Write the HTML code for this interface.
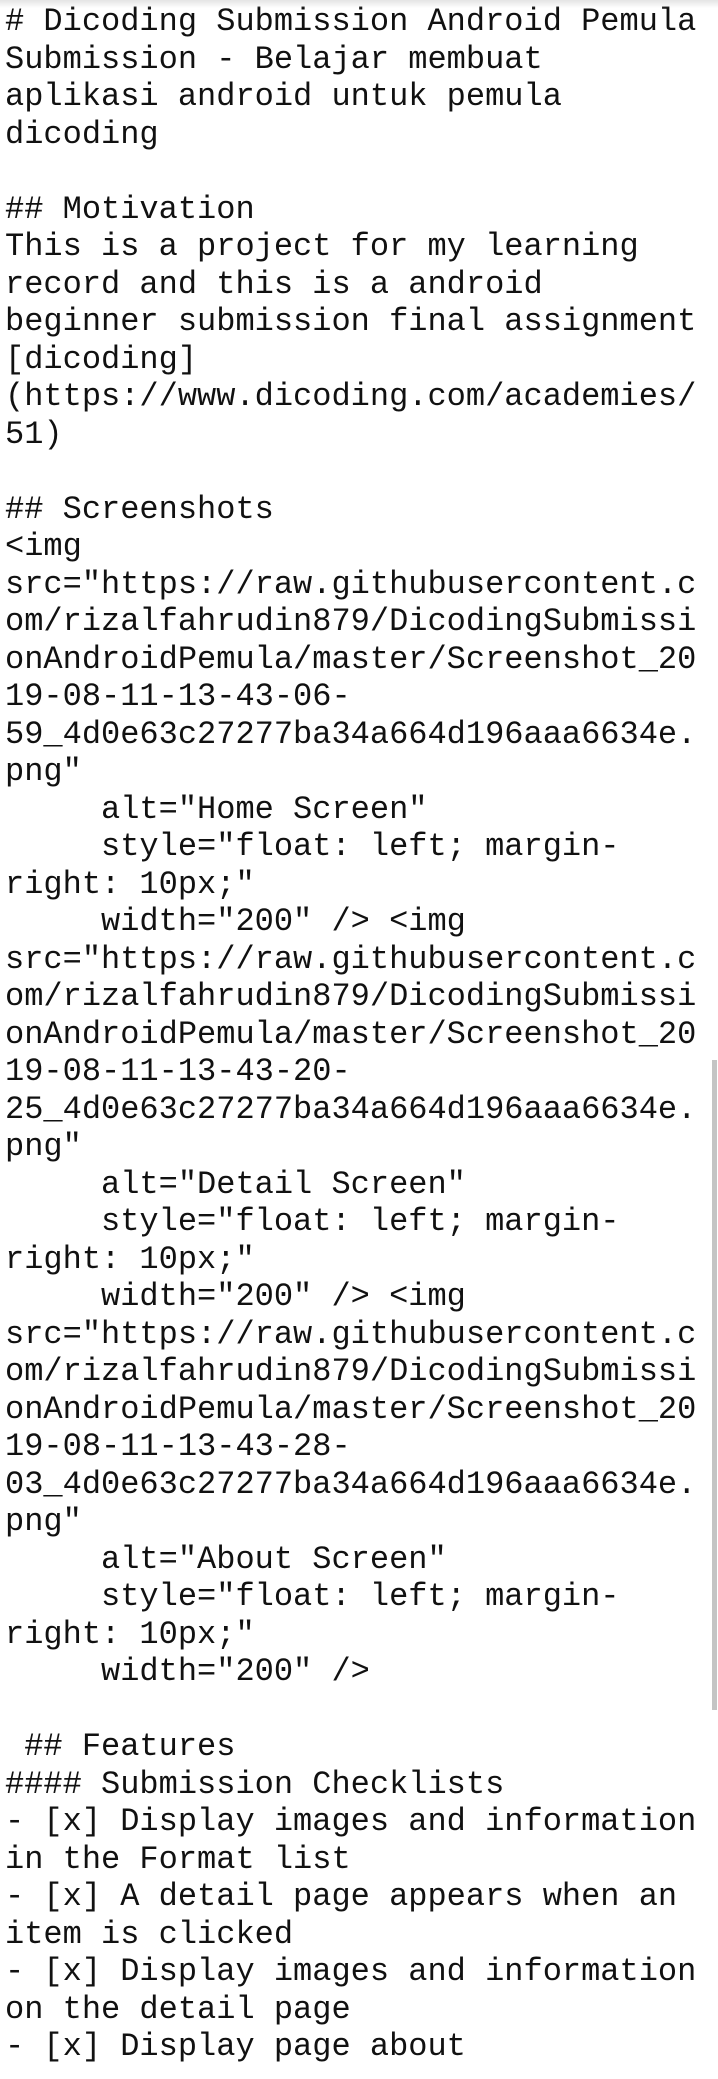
<!DOCTYPE html>
<html><head><meta charset="utf-8"><style>
html,body{margin:0;padding:0;background:#fff;width:718px;height:2079px;overflow:hidden;position:relative}
pre{margin:0;padding:3px 0 0 5px;font-family:"Liberation Mono","DejaVu Sans Mono",monospace;font-size:32px;line-height:37.5px;color:#111;white-space:pre}
.sh{position:absolute;left:0;top:0;width:718px;height:8px;background:linear-gradient(#e4e4e4,rgba(255,255,255,0))}
.sb{position:absolute;left:712px;top:1060px;width:5px;height:650px;background:#c4c4c4}
</style></head><body>
<pre># Dicoding Submission Android Pemula
Submission - Belajar membuat
aplikasi android untuk pemula
dicoding

## Motivation
This is a project for my learning
record and this is a android
beginner submission final assignment
[dicoding]
(https://www.dicoding.com/academies/
51)

## Screenshots
&lt;img
src="https://raw.githubusercontent.c
om/rizalfahrudin879/DicodingSubmissi
onAndroidPemula/master/Screenshot_20
19-08-11-13-43-06-
59_4d0e63c27277ba34a664d196aaa6634e.
png"
     alt="Home Screen"
     style="float: left; margin-
right: 10px;"
     width="200" /&gt; &lt;img
src="https://raw.githubusercontent.c
om/rizalfahrudin879/DicodingSubmissi
onAndroidPemula/master/Screenshot_20
19-08-11-13-43-20-
25_4d0e63c27277ba34a664d196aaa6634e.
png"
     alt="Detail Screen"
     style="float: left; margin-
right: 10px;"
     width="200" /&gt; &lt;img
src="https://raw.githubusercontent.c
om/rizalfahrudin879/DicodingSubmissi
onAndroidPemula/master/Screenshot_20
19-08-11-13-43-28-
03_4d0e63c27277ba34a664d196aaa6634e.
png"
     alt="About Screen"
     style="float: left; margin-
right: 10px;"
     width="200" /&gt;

 ## Features
#### Submission Checklists
- [x] Display images and information
in the Format list
- [x] A detail page appears when an
item is clicked
- [x] Display images and information
on the detail page
- [x] Display page about</pre>
<div class="sh"></div>
<div class="sb"></div>
</body></html>
